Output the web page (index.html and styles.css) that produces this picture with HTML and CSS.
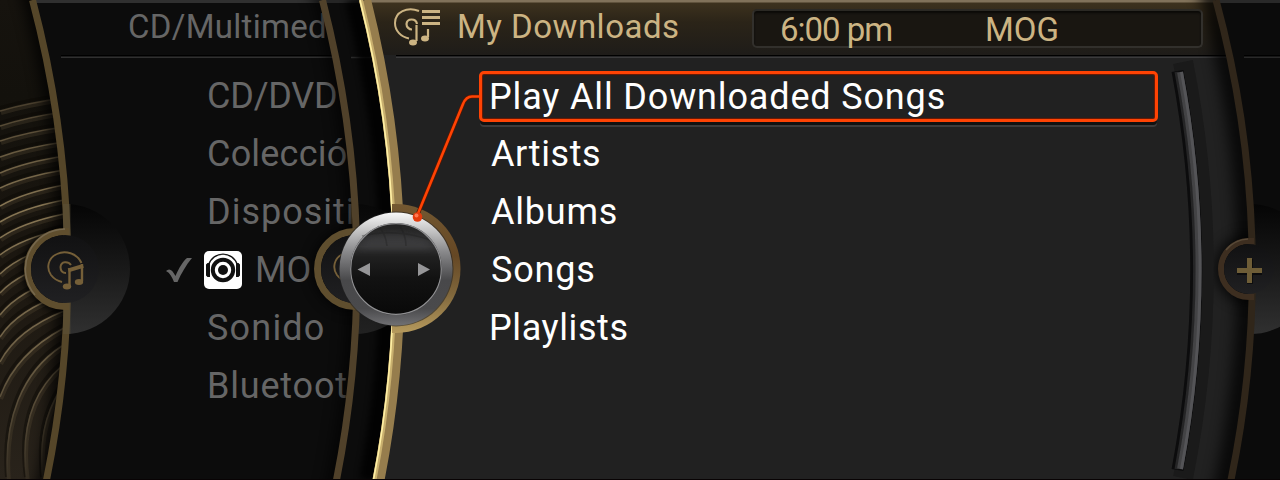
FILE: index.html
```
<!DOCTYPE html>
<html lang="en">
<head>
  <meta charset="UTF-8" />
  <title>My Downloads</title>
  <link rel="stylesheet" href="styles.css">
</head>
<body>
  <div class="screen">

    <!-- left side: disc, first edge and its socket -->
    <svg class="layer back" viewBox="0 0 1280 480">
      <defs>
        <linearGradient id="plate" x1="0" y1="0" x2="0" y2="1">
          <stop offset="0" stop-color="#050505" />
          <stop offset="0.5" stop-color="#191919" />
          <stop offset="1" stop-color="#303030" />
        </linearGradient>
        <linearGradient id="well" x1="0" y1="0" x2="0" y2="1">
          <stop offset="0" stop-color="#111112" />
          <stop offset="1" stop-color="#202022" />
        </linearGradient>
        <linearGradient id="disc" x1="0" y1="0" x2="0" y2="1">
          <stop offset="0" stop-color="#16130e" />
          <stop offset="0.2" stop-color="#13110c" />
          <stop offset="0.6" stop-color="#1d1811" />
          <stop offset="1" stop-color="#29231b" />
        </linearGradient>
        <linearGradient id="groove" gradientUnits="userSpaceOnUse" x1="0" y1="90" x2="0" y2="480">
          <stop offset="0" stop-color="#443a2a" />
          <stop offset="0.3" stop-color="#8d7b57" />
          <stop offset="0.65" stop-color="#75664a" />
          <stop offset="1" stop-color="#352e23" />
        </linearGradient>
        <clipPath id="discClip"><path d="M0,0 H33 A1050,1050 0 0 1 46,480 H0 Z" /></clipPath>
        <filter id="soft" x="-50%" y="-50%" width="200%" height="200%"><feGaussianBlur stdDeviation="7" /></filter>
        <filter id="soft3" x="-50%" y="-50%" width="200%" height="200%"><feGaussianBlur stdDeviation="3" /></filter>
        <g id="discIcon" fill="none">
          <path d="M81.500,263 C77,253 65,250 57,254 C48,258 46,268 51,275 C54,279 58,281 62,282" stroke-width="1.900" />
          <path d="M71,265 C68,261 61,261 60.500,267 C60.500,270 62,273 66,273" stroke-width="2" />
          <path d="M69.500,287 V268 M82,281 V264" stroke-width="2.400" />
          <path d="M68.300,270.300 L83.200,265.800" stroke-width="4" />
          <ellipse cx="67" cy="286.500" rx="4.200" ry="3" class="note" />
          <ellipse cx="79" cy="282" rx="4.200" ry="3" class="note" />
        </g>
      </defs>

      <rect width="1280" height="480" fill="#0c0c0c" />
      <g clip-path="url(#discClip)">
        <rect width="75" height="480" fill="url(#disc)" />
        <g id="grooves"></g>
        <circle cx="-983" cy="269" r="1050" fill="none" stroke="#000" stroke-width="18" opacity=".8" filter="url(#soft)" />
        <circle cx="65" cy="269" r="43" fill="#000" opacity=".8" filter="url(#soft3)" />
      </g>
      <rect x="36" width="1244" height="3" fill="#303030" />
      <rect x="61" y="55" width="290" height="1.500" fill="#000" />
      <rect x="61" y="56.500" width="290" height="1.500" fill="#303030" />

      <path d="M65,204 A65,65 0 0 1 65,334 Z" fill="url(#plate)" />
      <path d="M32.500,0 A1050,1050 0 0 1 46.500,480" fill="none" stroke="#554629" stroke-width="7" />
      <path d="M63,204 h7.500 v130 h-7.500 z" fill="#60563f" opacity=".4" />
      <path d="M69,231.500 H65 A37.500,37.500 0 0 0 65,306.500 H69" fill="none" stroke="#5f4e2e" stroke-width="7" />
      <path d="M63,229 H65 A40,40 0 0 0 35,295" fill="none" stroke="#76684e" stroke-width="1.500" />
      <circle cx="65" cy="269" r="34" fill="url(#well)" />
      <use href="#discIcon" class="icon-dim" />
    </svg>

    <div class="menu">
      <div class="menu-title"><span class="mm">CD/Multimed</span></div>
      <ul class="menu-list">
        <li><span class="cd">CD/DVD</span></li>
        <li><span class="col">Colecció</span></li>
        <li><span class="dis">Dispositi</span></li>
        <li class="checked">
          <svg class="check" viewBox="0 0 28 28"><path d="M1,15 C4,12 7,13 10.500,20 C14,12 18,5 22,2 H27 C21,9 16,18 12.500,26 H9 C7,21 5,17 1,15 Z" fill="#666" /></svg>
          <svg class="mog" viewBox="0 0 38 38">
            <rect width="38" height="38" rx="5" fill="#fff" />
            <path d="M4.500,14 C9,-.5 29,-.5 33.500,14" fill="none" stroke="#111" stroke-width="1.300" />
            <circle cx="19" cy="19" r="10.200" fill="none" stroke="#111" stroke-width="4" />
            <circle cx="19" cy="19" r="5" fill="#111" />
            <path d="M3.500,12 h2.500 v14 h-2.500 l-1.500,-1.500 v-11 z M34.500,12 h-2.500 v14 h2.500 l1.500,-1.500 v-11 z" fill="#111" />
          </svg>
          <span class="mo">MO</span>
        </li>
        <li><span class="son">Sonido</span></li>
        <li><span class="blu">Bluetoot</span></li>
      </ul>
    </div>

    <!-- middle edges, main panel, right side -->
    <svg class="layer front" viewBox="0 0 1280 480">
      <defs>
        <linearGradient id="head" x1="0" y1="0" x2="0" y2="1">
          <stop offset="0" stop-color="#40341f" />
          <stop offset="0.4" stop-color="#2b2418" />
          <stop offset="1" stop-color="#1e1c19" />
        </linearGradient>
        <linearGradient id="ring" x1="0" y1="0" x2="0" y2="1">
          <stop offset="0" stop-color="#735831" />
          <stop offset="0.4" stop-color="#654724" />
          <stop offset="0.7" stop-color="#80673c" />
          <stop offset="1" stop-color="#b69a5d" />
        </linearGradient>
        <linearGradient id="metal" x1="0" y1="0" x2="0" y2="1">
          <stop offset="0" stop-color="#f8f8f8" />
          <stop offset="0.1" stop-color="#d8d8d8" />
          <stop offset="0.35" stop-color="#88888a" />
          <stop offset="0.6" stop-color="#48484a" />
          <stop offset="0.85" stop-color="#4a4a4c" />
          <stop offset="1" stop-color="#707073" />
        </linearGradient>
        <linearGradient id="glass" x1="0" y1="0" x2="0" y2="1">
          <stop offset="0" stop-color="#222" />
          <stop offset="0.25" stop-color="#343435" />
          <stop offset="0.36" stop-color="#202020" />
          <stop offset="0.6" stop-color="#121212" />
          <stop offset="1" stop-color="#090909" />
        </linearGradient>
        <clipPath id="panelClip"><path d="M365,0 A1100,1100 0 0 1 379,480 H1231 A1030,1030 0 0 0 1215,0 Z" /></clipPath>
        <clipPath id="leftOf"><path d="M0,0 H322 A1080,1080 0 0 1 336.500,480 H0 Z" /></clipPath>
      </defs>

      <!-- dim edge -->
      <g clip-path="url(#leftOf)">
        <circle cx="-724" cy="269" r="1080" fill="none" stroke="#000" stroke-width="18" opacity=".6" filter="url(#soft)" />
        <circle cx="355" cy="269" r="42" fill="#000" opacity=".8" filter="url(#soft)" />
      </g>
      <path d="M322.500,0 A1080,1080 0 0 1 336.500,480 H380 A1100,1100 0 0 0 366,0 Z" fill="#0c0c0c" />
      <rect x="323" width="42" height="3" fill="#252525" />
      <path d="M351,57.500 H374" stroke="#2b2b2b" stroke-width="1.500" />
      <path d="M354,0 A1100,1100 0 0 1 368,480" fill="none" stroke="#000" stroke-width="18" opacity=".8" filter="url(#soft3)" />
      <path d="M355,204 A65,65 0 0 1 355,334 Z" fill="url(#plate)" opacity=".6" />
      <path d="M322.500,0 A1080,1080 0 0 1 336.500,480" fill="none" stroke="#50412a" stroke-width="7" />
      <path d="M359,231.500 H355 A37.500,37.500 0 0 0 355,306.500 H359" fill="none" stroke="#5f4e2e" stroke-width="7" />
      <circle cx="355" cy="269" r="34" fill="url(#well)" />
      <use href="#discIcon" class="icon-dim" x="286" />

      <!-- main panel -->
      <g clip-path="url(#panelClip)">
        <rect x="350" width="900" height="480" fill="#212121" />
        <rect x="350" width="900" height="55" fill="url(#head)" />
        <rect x="350" width="900" height="2.500" fill="#81725a" />
        <rect x="396" y="55" width="830" height="1.500" fill="#000" />
        <rect x="396" y="56.500" width="830" height="1.500" fill="#3b3b3c" />
        <circle cx="224" cy="269" r="1024" fill="none" stroke="#000" stroke-width="22" opacity=".75" filter="url(#soft)" />
        <circle cx="1249" cy="269" r="34" fill="#000" opacity=".8" filter="url(#soft)" />
        <path d="M1183,62 A1060,1060 0 0 1 1183,478" fill="none" stroke="#1a1a1a" stroke-width="20" />
        <path d="M1177.500,71 A1080,1080 0 0 1 1177.500,470" fill="none" stroke="#0c0c0d" stroke-width="12" />
        <path d="M1176,72 A1080,1080 0 0 1 1176,469" fill="none" stroke="#252526" stroke-width="3" />
        <path d="M1180,72 A1080,1080 0 0 1 1180,469" fill="none" stroke="#434345" stroke-width="6" />
        <path d="M1181.500,72 A1080,1080 0 0 1 1181.500,469" fill="none" stroke="#545457" stroke-width="3" />
      </g>

      <!-- right side -->
      <path d="M1215,0 A1030,1030 0 0 1 1231,480 H1280 V0 Z" fill="#0b0b0b" />
      <rect x="1216" width="64" height="3" fill="#292929" />
      <rect x="1244" y="55" width="36" height="1.500" fill="#000" />
      <rect x="1244" y="56.500" width="36" height="1.500" fill="#292929" />
      <path d="M1250,204 A65,65 0 0 1 1250,334 Z" fill="url(#plate)" />
      <path d="M1216,0 A1030,1030 0 0 1 1231,480" fill="none" stroke="#30261a" stroke-width="7" />
      <path d="M1254,241 H1249 A28,28 0 0 0 1249,297 H1254" fill="none" stroke="#3d2e20" stroke-width="6" />
      <path d="M1248,239 A30,30 0 0 0 1226,250" fill="none" stroke="#594a38" stroke-width="1.500" />
      <circle cx="1249" cy="269" r="25" fill="url(#well)" />
      <path d="M1237,272 h25 M1250,259 v25" stroke="#000" stroke-width="6" opacity=".5" />
      <path d="M1237,270.500 h25 M1249.500,258 v25" stroke="#6e5d37" stroke-width="5" />

      <!-- bright edge and knob -->
      <path d="M365,0 A1100,1100 0 0 1 378.500,480" fill="none" stroke="#967d4d" stroke-width="12" />
      <path d="M361,0 A1100,1100 0 0 1 374.500,480" fill="none" stroke="#c9b06f" stroke-width="4" />
      <path d="M360,0 A1100,1100 0 0 1 373.500,480" fill="none" stroke="#fff0a5" stroke-width="1.600" />
      <path d="M392,204 H396 A64.500,64.500 0 0 1 396,333 H392 Z" fill="url(#ring)" />
      <circle cx="396" cy="269" r="57.500" fill="#222" opacity=".6" />
      <circle cx="396" cy="269" r="56.500" fill="url(#metal)" />
      <circle cx="396" cy="269" r="46" fill="#202022" />
      <circle cx="396" cy="269" r="45" fill="url(#glass)" />
      <path d="M366,238 Q395,230 428,240 L430,248 H360 Z" fill="#454546" opacity=".5" filter="url(#soft3)" />
      <path d="M362,236 Q395,228 430,240 M378,226 Q386,234 387,246 M400,226 Q406,236 406,246" fill="none" stroke="#1c1c1c" stroke-width="1.500" opacity=".35" />
      <circle cx="396" cy="269" r="45.300" fill="none" stroke="#8f8f91" stroke-width="1.200" />
      <path d="M357.500,269.500 L370,263 V276 Z M430,269.500 L418,263 V276 Z" fill="#969698" />

      <!-- pointer from knob to the selected row -->
      <path d="M480,96.500 H472 Q466,96.500 463,104 L417,216" fill="none" stroke="#5b1600" stroke-width="4" />
      <path d="M480,96.500 H472 Q466,96.500 463,104 L417,216" fill="none" stroke="#ff4304" stroke-width="2.600" />
      <circle cx="417.500" cy="217" r="4.800" fill="#e33a0c" />
      <circle cx="416.500" cy="215.500" r="2" fill="#ff7850" />
      <rect y="479" width="1280" height="1" fill="#080304" />
    </svg>

    <div class="main">
      <div class="header">
        <svg class="dl-icon" viewBox="0 0 48 40">
          <g fill="none" stroke="#ccb483">
            <path d="M25,4 C13,-.5 1,5 1,16 C1,24 7,30 15,31.500" stroke-width="2" />
            <path d="M23,17 C22,11 13,11 12.500,17 C12.500,20 15,22.500 18,22.500" stroke-width="2.200" />
            <path d="M22.500,34 V18 M34,30 V22" stroke-width="2.200" />
            <path d="M28,4.500 H46 M28,10.500 H46 M28,16.500 H46" stroke-width="3" />
          </g>
          <ellipse cx="19" cy="35.500" rx="4" ry="3" fill="#ccb483" />
          <ellipse cx="31" cy="31.500" rx="4" ry="3" fill="#ccb483" />
        </svg>
        <div class="title">My Downloads</div>
        <div class="status">
          <span class="time">6:00 pm</span>
          <span class="source">MOG</span>
        </div>
      </div>
      <ul class="list">
        <li class="selected"><span class="play">Play All Downloaded Songs</span></li>
        <li><span class="artists">Artists</span></li>
        <li><span class="albums">Albums</span></li>
        <li><span class="songs">Songs</span></li>
        <li><span class="playlists">Playlists</span></li>
      </ul>
    </div>
  </div>

  <script>
    // grooves of the disc: y at the left border, y at the panel edge
    const lines = [
      [111, 98], [126, 112], [141, 127], [157, 142], [173, 156], [188, 170],
      [206, 185], [222, 200], [238, 214], [255, 229], [274, 243], [293, 260],
      [315, 277], [337, 294], [362, 311], [397, 328]
    ];
    const paths = lines.map(([left, right], i) =>
      `M0,${left} Q${28 - i * 0.8},${left - (left - right) * 0.63} 64,${right}`);
    paths.push('M8,480 C3,420 22,372 62,346');
    paths.push('M27,480 C20,430 32,392 62,366');
    paths.push('M43,480 C39,440 45,415 60,390');

    const grooves = document.getElementById('grooves');
    function addGroove(d, dy, color, width, opacity) {
      const p = document.createElementNS('http://www.w3.org/2000/svg', 'path');
      p.setAttribute('d', d);
      p.setAttribute('transform', `translate(${dy / 2},${dy})`);
      p.setAttribute('fill', 'none');
      p.setAttribute('stroke', color);
      p.setAttribute('stroke-width', width);
      p.setAttribute('opacity', opacity);
      grooves.appendChild(p);
    }
    paths.forEach(d => {
      addGroove(d, -3, '#0a0805', 3, 0.45);
      addGroove(d, 2, '#584b35', 4, 0.3);
      addGroove(d, 0, 'url(#groove)', 1.5, 0.95);
    });
  </script>
</body>
</html>
```
FILE: styles.css
```
body {
  margin: 0;
  background: #0c0c0c;
  font-family: Roboto, "Liberation Sans", sans-serif;
  overflow: hidden;
}

ul {
  list-style: none;
  margin: 0;
  padding: 0;
}

.screen {
  position: relative;
  display: grid;
  grid-template-columns: 352px 1fr;
  width: 1280px;
  height: 480px;
  overflow: hidden;
}

/* artwork under and over the left menu */
.layer {
  position: absolute;
  top: 0;
  left: 0;
  width: 1280px;
  height: 480px;
}

.front {
  z-index: 2;
}

.icon-dim {
  stroke: #755f38;
}

.note {
  fill: #755f38;
  stroke: none;
}

.menu {
  z-index: 1;
  color: #666;
  white-space: nowrap;
}

.menu-title {
  height: 67px;
  padding-left: 128px;
  box-sizing: border-box;
  font-size: 33px;
  line-height: 53px;
}

.menu-list li {
  display: flex;
  align-items: center;
  height: 58px;
  padding-left: 207px;
  font-size: 36px;
}

.menu-list .checked {
  padding-left: 165px;
}

.check {
  width: 28px;
  height: 28px;
}

.mog {
  width: 38px;
  height: 38px;
  margin: 0 13px 0 11px;
}

.main {
  z-index: 3;
  white-space: nowrap;
}

.header {
  display: flex;
  height: 67px;
  padding-left: 42px;
  color: #ccb483;
}

.dl-icon {
  width: 48px;
  height: 40px;
  margin-top: 7px;
}

.title {
  width: 295px;
  padding-left: 15px;
  font-size: 33px;
  line-height: 53px;
}

.status {
  display: flex;
  width: 451px;
  height: 39px;
  margin-top: 9px;
  box-sizing: border-box;
  border: 2px solid #32302c;
  border-top-color: #2b2924;
  border-radius: 5px;
  background: #191611;
  box-shadow: inset 0 2px 2px #0b0a08;
  font-size: 33px;
  line-height: 37px;
}

.time {
  width: 205px;
  padding-left: 26px;
  letter-spacing: -1px;
}

.list {
  padding-left: 127px;
  color: #fff;
}

.list li {
  display: flex;
  align-items: center;
  height: 58px;
  padding-left: 12px;
  font-size: 36px;
}

.list .selected {
  width: 679px;
  height: 51px;
  margin: 4px 0 3px;
  padding-left: 7px;
  box-sizing: border-box;
  border: 3px solid #ff4304;
  border-radius: 5px;
  box-shadow: inset 0 0 1px 1px #6c1b05, 0 4px 0 -1px #111, 0 6px 0 -1px #3b3b3b;
}

.list li:last-child {
  padding-left: 10px;
}

/* tracking per label */
.mm { letter-spacing: 0.3px; }
.cd { letter-spacing: -0.2px; }
.col { letter-spacing: 0.2px; }
.dis { letter-spacing: 1px; }
.son { letter-spacing: 1.2px; }
.blu { letter-spacing: 0.8px; }
.title { letter-spacing: 0.5px; }
.play { letter-spacing: 0.85px; }
.artists { letter-spacing: 0.6px; }
.albums,
.songs { letter-spacing: 0.8px; }
.playlists { letter-spacing: 0.6px; }
```
